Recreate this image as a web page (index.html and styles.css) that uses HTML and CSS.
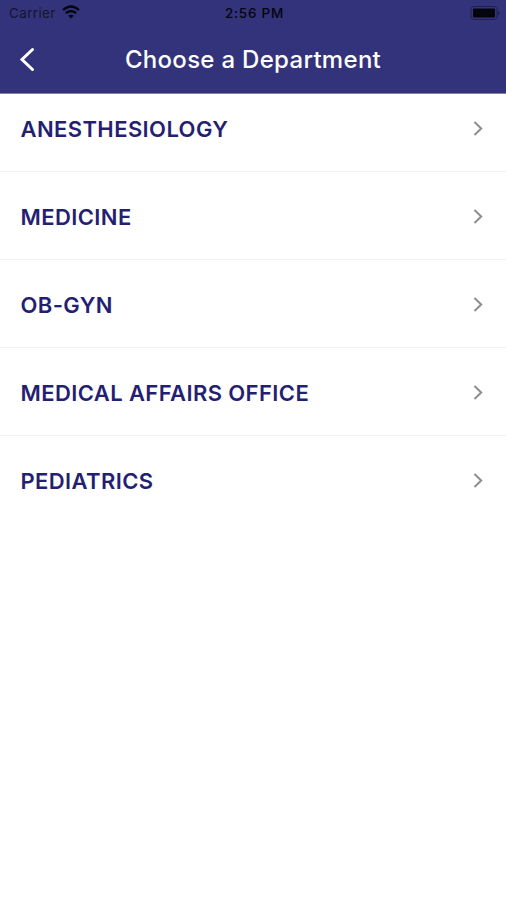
FILE: index.html
```html
<!DOCTYPE html>
<html lang="en">
<head>
<meta charset="utf-8">
<title>Choose a Department</title>
<link rel="stylesheet" href="styles.css">
</head>
<body>
<header class="header">
  <div class="status">
    <div class="carrier"><span>Carrier</span>
      <svg class="wifi" width="18" height="14" viewBox="0 0 18 14"><path d="M1 5Q9-2 17 5M3.8 8.2Q9 4 14.2 8.2" fill="none" stroke="currentColor" stroke-width="2.3"/><path d="M6.3 10.7Q9 8.6 11.7 10.7L9 13.5Z" fill="currentColor"/></svg>
    </div>
    <span class="time">2:56 PM</span>
    <svg class="battery" width="30" height="14" viewBox="0 0 30 14"><rect x="1" y=".5" width="26" height="13" rx="3" fill="none" stroke="currentColor" stroke-opacity=".4"/><rect x="3" y="2.5" width="22" height="9" rx="1" fill="currentColor"/><path d="M28 4.5Q31 7 28 9.5Z" fill="currentColor" fill-opacity=".5"/></svg>
  </div>
  <div class="nav">
    <svg class="back" width="16" height="26" viewBox="0 0 16 26"><path d="M13.5 2.5L3 12.5L13.5 22.5" fill="none" stroke="currentColor" stroke-width="3" stroke-linecap="round"/></svg>
    <h1 class="title">Choose a Department</h1>
  </div>
</header>
<main class="list">
  <div class="row"><span class="name">ANESTHESIOLOGY</span><svg class="chevron" width="10" height="16" viewBox="0 0 10 16"><path d="M1.5 1L8.2 7.5L1.5 14" fill="none" stroke="currentColor" stroke-width="2"/></svg></div>
  <div class="row"><span class="name">MEDICINE</span><svg class="chevron" width="10" height="16" viewBox="0 0 10 16"><path d="M1.5 1L8.2 7.5L1.5 14" fill="none" stroke="currentColor" stroke-width="2"/></svg></div>
  <div class="row"><span class="name">OB-GYN</span><svg class="chevron" width="10" height="16" viewBox="0 0 10 16"><path d="M1.5 1L8.2 7.5L1.5 14" fill="none" stroke="currentColor" stroke-width="2"/></svg></div>
  <div class="row"><span class="name">MEDICAL AFFAIRS OFFICE</span><svg class="chevron" width="10" height="16" viewBox="0 0 10 16"><path d="M1.5 1L8.2 7.5L1.5 14" fill="none" stroke="currentColor" stroke-width="2"/></svg></div>
  <div class="row"><span class="name">PEDIATRICS</span><svg class="chevron" width="10" height="16" viewBox="0 0 10 16"><path d="M1.5 1L8.2 7.5L1.5 14" fill="none" stroke="currentColor" stroke-width="2"/></svg></div>
</main>
</body>
</html>
```
FILE: styles.css
```css
* { box-sizing: border-box; }
body { margin: 0; background: #fff; font-family: Inter, "Liberation Sans", sans-serif; }
svg { display: block; flex: none; }
.header { height: 94px; background: #33337b; border-bottom: 1px solid #8580b0; position: relative; }
.status { height: 26px; padding: 0 6px 0 9px; display: grid; grid-template-columns: 1fr auto 1fr; align-items: center; color: #05050d; font-size: 13.5px; line-height: 26px; }
.carrier { display: flex; align-items: center; gap: 6px; letter-spacing: .35px; color: #15152f; }
.wifi { color: #05050d; position: relative; top: -1px; }
.time { font-weight: 500; font-size: 13.5px; letter-spacing: .75px; }
.battery { justify-self: end; }
.nav { height: 67px; display: grid; grid-template-columns: 20px 1fr 20px; align-items: center; padding: 0 19px; color: #fff; }
.title { margin: 0; text-align: center; font-size: 24px; line-height: 32px; font-weight: 500; letter-spacing: .3px; white-space: nowrap; }
.list { margin-top: -10px; }
.row { height: 88px; display: flex; align-items: center; justify-content: space-between; padding: 2px 23px 0 20.5px; border-bottom: 1px solid #f3f3f5; }
.row:last-child { border-bottom-color: transparent; }
.name { color: #251f72; font-size: 22px; line-height: 28px; font-weight: 600; letter-spacing: .4px; }
.chevron { color: #8d8d8d; }
```
